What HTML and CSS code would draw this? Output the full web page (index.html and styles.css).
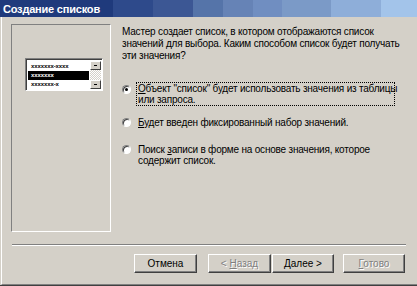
FILE: index.html
```html
<!DOCTYPE html>
<html lang="ru">
<head>
<meta charset="utf-8">
<title>Создание списков</title>
<link rel="stylesheet" href="styles.css">
</head>
<body>
<div class="window">
  <div class="titlebar"><span class="title">Создание списков</span></div>
  <div class="frame">
    <div class="main">
      <div class="preview">
        <div class="listmock">
          <div class="rows">
            <div class="row">xxxxxxx-xxxx</div>
            <div class="row sel">xxxxxxx</div>
            <div class="row">xxxxxxx-x</div>
          </div>
          <div class="scroll">
            <div class="sbtn"><span class="dash"></span></div>
            <div class="strack"></div>
            <div class="sbtn"><span class="dash"></span></div>
          </div>
        </div>
      </div>
      <div class="content">
        <p class="intro">Мастер создает список, в котором отображаются список<br>значений для выбора. Каким способом список будет получать<br>эти значения?</p>
        <div class="options">
          <div class="option opt1">
            <span class="radio checked"></span>
            <span class="label focus"><u>О</u>бъект "список" будет использовать значения из таблицы<br>или запроса.</span>
          </div>
          <div class="option opt2">
            <span class="radio"></span>
            <span class="label"><u>Б</u>удет введен фиксированный набор значений.</span>
          </div>
          <div class="option opt3">
            <span class="radio"></span>
            <span class="label">Поиск <u>з</u>аписи в форме на основе значения, которое<br>содержит список.</span>
          </div>
        </div>
      </div>
    </div>
    <div class="separator"></div>
    <div class="buttons">
      <button class="btn btn-cancel">Отмена</button>
      <button class="btn btn-back" disabled>&lt; <u>Н</u>азад</button>
      <button class="btn btn-next"><u>Д</u>алее &gt;</button>
      <button class="btn btn-finish" disabled><u>Г</u>отово</button>
    </div>
  </div>
</div>
</body>
</html>
```

FILE: styles.css
```css
* { box-sizing: border-box; }
html, body { margin: 0; padding: 0; }
body {
  width: 417px;
  height: 286px;
  overflow: hidden;
  background: #d4d0c8;
  font-family: "Liberation Sans", Arial, sans-serif;
  font-size: 10px;
  color: #000;
}
.window {
  width: 417px;
  height: 286px;
  background: #d4d0c8;
  border-bottom: 1px solid #404040;
}
.titlebar {
  height: 17px;
  display: flex;
  align-items: center;
  padding-left: 3px;
  background: linear-gradient(to right,
    #1f3a7c 0, #1f3a7c 113px,
    #2e4a8b 113px, #2e4a8b 153px,
    #3c5794 153px, #3c5794 193px,
    #5574a9 193px, #5574a9 223px,
    #6683b6 223px, #6683b6 253px,
    #708ec1 253px, #708ec1 282px,
    #7b9ac7 282px, #7b9ac7 331px,
    #8eaed9 331px, #8eaed9 381px,
    #a3c4ea 381px, #a3c4ea 417px);
}
.title {
  color: #fff;
  font-weight: bold;
  font-size: 11px;
  letter-spacing: -0.2px;
}
.frame {
  margin-left: 1px;
  height: 268px;
  border-left: 1px solid #fff;
  border-bottom: 1px solid #808080;
}
.main {
  display: flex;
  padding-top: 7px;
  padding-left: 9px;
}
.preview {
  width: 100px;
  height: 208px;
  border: 1px solid;
  border-color: #808080 #fff #fff #808080;
  padding-top: 33px;
  padding-left: 13px;
}
.listmock {
  width: 78px;
  height: 33px;
  display: flex;
  background: #fff;
  border: 1px solid;
  border-color: #808080 #fff #fff #808080;
  box-shadow: inset 1px 1px #404040;
  padding: 2px 1px 1px 2px;
}
.rows {
  flex: 1;
  display: flex;
  flex-direction: column;
  padding-top: 1px;
}
.row {
  height: 9px;
  line-height: 9px;
  font-size: 6px;
  font-weight: bold;
  padding-left: 3px;
  letter-spacing: -0.1px;
}
.row.sel {
  background: #000;
  color: #fff;
  margin-right: 1px;
}
.scroll {
  width: 11px;
  display: flex;
  flex-direction: column;
}
.sbtn {
  height: 9px;
  background: #d4d0c8;
  border: 1px solid;
  border-color: #fff #404040 #404040 #fff;
  display: flex;
  align-items: center;
  justify-content: center;
}
.dash {
  width: 3px;
  height: 1px;
  background: #000;
}
.strack {
  height: 10px;
  background-color: #fff;
  background-image: repeating-conic-gradient(#d4d0c8 0 25%, #fff 0 50%);
  background-size: 2px 2px;
}
.content {
  padding-left: 11px;
  padding-top: 2px;
  letter-spacing: -0.2px;
}
.intro {
  margin: 0;
  line-height: 12px;
  white-space: nowrap;
}
.options {
  display: flex;
  flex-direction: column;
  margin-top: 20px;
}
.option {
  display: flex;
  align-items: flex-start;
  line-height: 11px;
  white-space: nowrap;
}
.opt2 { margin-top: 10px; }
.opt3 { margin-top: 14px; }
.radio {
  position: relative;
  flex: none;
  width: 9px;
  height: 9px;
  margin-top: 2px;
  margin-right: 5px;
  border-radius: 50%;
  background: #fff;
  border: 1px solid;
  border-color: #808080 #fff #fff #808080;
  box-shadow: inset 1px 1px #404040;
}
.opt1 .radio { margin-top: 3px; }
.radio.checked::after {
  content: "";
  position: absolute;
  left: 2px;
  top: 2px;
  width: 3px;
  height: 3px;
  border-radius: 50%;
  background: #000;
}
.label {
  padding-left: 1px;
  border: 1px solid transparent;
}
.label.focus {
  border: 1px dotted #000;
  width: 259px;
}
.separator {
  margin-top: 12px;
  margin-left: 10px;
  width: 394px;
  height: 2px;
  border-top: 1px solid #808080;
  border-bottom: 1px solid #fff;
}
.buttons {
  display: flex;
  justify-content: flex-end;
  padding-right: 12px;
  margin-top: 8px;
}
.btn {
  width: 62px;
  height: 19px;
  padding: 0;
  margin: 0;
  font-family: "Liberation Sans", Arial, sans-serif;
  font-size: 10px;
  color: #000;
  background: #d4d0c8;
  border: 1px solid;
  border-color: #fff #404040 #404040 #fff;
  box-shadow: inset -1px -1px #808080;
  border-radius: 0;
}
.btn[disabled] {
  color: #808080;
  text-shadow: 1px 1px #fff;
}
.btn-back { margin-left: 11px; width: 63px; }
.btn-next { margin-left: 1px; }
.btn-finish { margin-left: 9px; }
.btn-cancel { width: 63px; }
```
